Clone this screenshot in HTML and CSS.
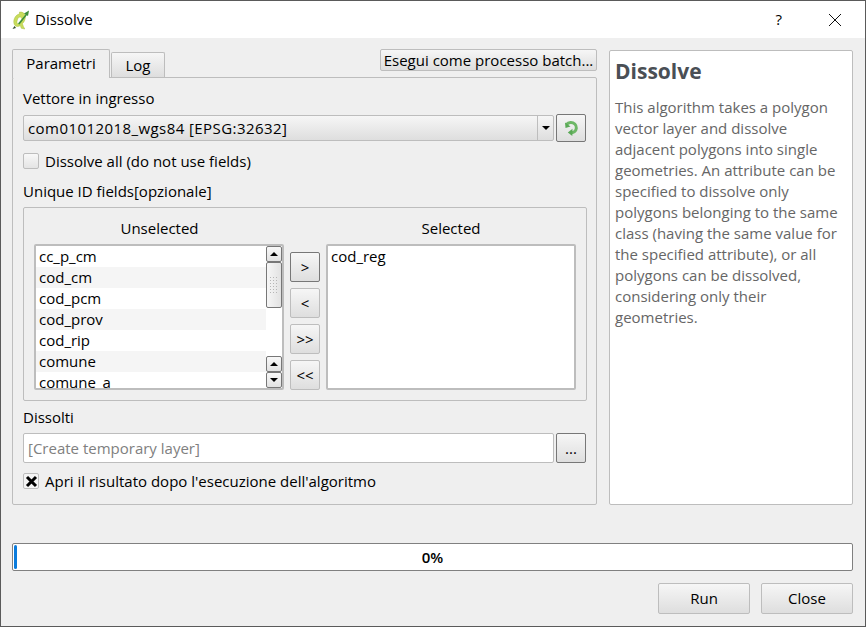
FILE: index.html
```html
<!DOCTYPE html>
<html lang="it">
<head>
  <meta charset="UTF-8" />
  <title>Dissolve</title>
  <link rel="stylesheet" href="styles.css">
</head>
<body>
  <div class="window">
    <!-- Barra del titolo -->
    <div class="titlebar">
      <svg class="app-icon" width="18" height="20" viewBox="0 0 18 20">
        <path d="M7.500 4C4 4.500 1.500 8.500 1.800 12.500c.2 2.500 1.700 4 3.700 4 1 0 2-.3 2.800-1l1 2.800 3.500.7-1.400-2.500-1-2.800c2-2 3-4.500 3-7 0-3-2.400-5-5.900-4.700zM7.800 7c1.500 0 2.200 1 2 2.700-.2 2-1.800 4.300-3.300 4.300-1.100 0-1.700-1-1.500-2.500C5.300 9.300 6.300 7 7.800 7z" fill="#c8dc5c" stroke="#a9c043" stroke-width=".5"/>
        <path d="M6 13.500L13.500 4.500 12 3.500 17 .5 16 6l-1.200-.8-7.300 9.300z" fill="#3c8e3a"/>
        <path d="M.5 19l3.500-1-1.500-2z" fill="#2f4a28"/>
      </svg>
      <span class="title-text">Dissolve</span>
      <span class="help-btn">?</span>
      <svg class="close-btn" width="12" height="12" viewBox="0 0 12 12">
        <path d="M0 0L12 12M12 0L0 12" stroke="#111" stroke-width="1" fill="none"/>
      </svg>
    </div>

    <div class="content">
      <div class="top-row">
        <div class="left-col">
          <div class="tab-row">
            <div class="tab tab-active">Parametri</div>
            <div class="tab">Log</div>
            <button class="btn batch-btn">Esegui come processo batch...</button>
          </div>

          <div class="tab-panel">
            <div class="field-label first">Vettore in ingresso</div>
            <div class="layer-row">
              <div class="combo">
                <span class="combo-text">com01012018_wgs84 [EPSG:32632]</span>
                <span class="combo-arrow"><span class="arrow-down"></span></span>
              </div>
              <button class="btn refresh-btn">
                <svg width="16" height="16" viewBox="0 0 16 16">
                  <path d="M3.500 4.500C5.500 2 9.500 1.800 11.800 4c2.300 2.300 2 6-.5 7.800-.9.600-1.700.9-2.600 1" fill="none" stroke="#6db766" stroke-width="3"/>
                  <path d="M9.500 8.800L4.800 12.500 9.300 16z" fill="#5aa956"/>
                  <path d="M2 2.500L7.500 6.500 2.500 8z" fill="#5aa956"/>
                </svg>
              </button>
            </div>
            <label class="check-row plain">
              <span class="check"></span>
              <span>Dissolve all (do not use fields)</span>
            </label>
            <div class="field-label unique">Unique ID fields[opzionale]</div>

            <div class="group">
              <div class="col-heads">
                <div class="head-left">Unselected</div>
                <div class="head-right">Selected</div>
              </div>
              <div class="lists">
                <div class="list list-left">
                  <div class="rows">
                    <div class="row">cc_p_cm</div>
                    <div class="row alt">cod_cm</div>
                    <div class="row">cod_pcm</div>
                    <div class="row alt">cod_prov</div>
                    <div class="row">cod_rip</div>
                    <div class="row alt">comune</div>
                    <div class="row">comune_a</div>
                  </div>
                  <div class="scrollbar">
                    <div class="sb-btn"><span class="arrow-up"></span></div>
                    <div class="sb-thumb"><span class="grip"></span></div>
                    <div class="sb-track"></div>
                    <div class="sb-btn"><span class="arrow-up"></span></div>
                    <div class="sb-btn"><span class="arrow-down"></span></div>
                  </div>
                </div>
                <div class="move-btns">
                  <button class="btn move-btn strong">&gt;</button>
                  <button class="btn move-btn">&lt;</button>
                  <button class="btn move-btn">&gt;&gt;</button>
                  <button class="btn move-btn">&lt;&lt;</button>
                </div>
                <div class="list list-right">
                  <div class="row">cod_reg</div>
                </div>
              </div>
            </div>

            <div class="field-label dissolved">Dissolti</div>
            <div class="output-row">
              <div class="text-input">[Create temporary layer]</div>
              <button class="btn more-btn">...</button>
            </div>
            <label class="check-row open-after">
              <span class="check checked">
                <svg width="13" height="13" viewBox="0 0 13 13">
                  <path d="M2 2L11 11M11 2L2 11" stroke="#000" stroke-width="3" fill="none"/>
                </svg>
              </span>
              <span>Apri il risultato dopo l'esecuzione dell'algoritmo</span>
            </label>
          </div>
        </div>

        <div class="help-panel">
          <h2>Dissolve</h2>
          <p>This algorithm takes a polygon vector layer and dissolve adjacent polygons into single geometries. An attribute can be specified to dissolve only polygons belonging to the same class (having the same value for the specified attribute), or all polygons can be dissolved, considering only their geometries.</p>
        </div>
      </div>

      <div class="progress">
        <div class="progress-chunk"></div>
        <span class="progress-text">0%</span>
      </div>

      <div class="footer">
        <button class="btn footer-btn">Run</button>
        <button class="btn footer-btn">Close</button>
      </div>
    </div>
  </div>
</body>
</html>
```

FILE: styles.css
```css
* {
  box-sizing: border-box;
}
html, body {
  margin: 0;
  height: 100%;
}
body {
  font-family: "Open Sans", "Liberation Sans", sans-serif;
  font-size: 15px;
  color: #000;
  background: #efefef;
}
.window {
  width: 866px;
  height: 627px;
  border: 1px solid #5a5a5a;
  overflow: hidden;
  background: #efefef;
}
/* Barra del titolo */
.titlebar {
  display: flex;
  align-items: center;
  height: 37px;
  background: #fff;
  padding-left: 11px;
}
.app-icon {
  flex: none;
}
.title-text {
  margin-left: 5px;
  padding-bottom: 2px;
  flex: 1;
}
.help-btn {
  margin-right: 47px;
  padding-bottom: 2px;
  font-size: 15px;
}
.close-btn {
  margin-right: 24px;
}
.content {
  padding: 11px 12px 0 11px;
}
.top-row {
  display: flex;
  gap: 12px;
}
.left-col {
  width: 585px;
}
/* Schede */
.tab-row {
  display: flex;
  align-items: flex-end;
  height: 28px;
}
.tab {
  height: 25px;
  width: 54px;
  margin-left: 1px;
  border: 1px solid #bdbdbd;
  border-bottom: none;
  border-radius: 2px 2px 0 0;
  background: linear-gradient(#f6f6f6, #dedede);
  text-align: center;
  line-height: 25px;
}
.tab-active {
  height: 29px;
  width: 98px;
  margin-left: 0;
  margin-bottom: -1px;
  background: #efefef;
  line-height: 27px;
  position: relative;
  z-index: 1;
}
.btn {
  font-family: inherit;
  font-size: 15px;
  color: #000;
  padding: 0;
  border: 1px solid #bdbdbd;
  border-radius: 2px;
  background: linear-gradient(#f6f6f6, #dedede);
}
.batch-btn {
  align-self: flex-start;
  width: 217px;
  height: 22px;
  margin-left: auto;
  line-height: 18px;
}
.tab-panel {
  height: 428px;
  border: 1px solid #bdbdbd;
  border-radius: 2px;
  padding: 0 10px;
}
.field-label {
  height: 20px;
  line-height: 20px;
}
.first {
  margin-top: 10px;
}
.layer-row {
  display: flex;
  align-items: center;
  height: 28px;
  margin-top: 6px;
}
.combo {
  display: flex;
  width: 532px;
  height: 26px;
  border: 1px solid #bdbdbd;
  border-radius: 2px;
  background: linear-gradient(#f6f6f6, #dedede);
}
.combo-text {
  flex: 1;
  padding-left: 4px;
  line-height: 24px;
  letter-spacing: .43px;
}
.combo-arrow {
  display: flex;
  align-items: center;
  justify-content: center;
  width: 16px;
  border-left: 1px solid #bdbdbd;
}
.arrow-down, .arrow-up {
  display: block;
  width: 0;
  height: 0;
  border-left: 4px solid transparent;
  border-right: 4px solid transparent;
}
.arrow-down {
  border-top: 4px solid #000;
}
.arrow-up {
  border-bottom: 4px solid #000;
}
.refresh-btn {
  display: flex;
  align-items: center;
  justify-content: center;
  width: 30px;
  height: 28px;
  margin-left: 2px;
  border-color: #777;
}
.check-row {
  display: flex;
  align-items: center;
  gap: 6px;
  height: 16px;
}
.plain {
  margin-top: 11px;
}
.check {
  display: flex;
  align-items: center;
  justify-content: center;
  width: 16px;
  height: 16px;
  border: 1px solid #bdbdbd;
  border-radius: 2px;
  background: linear-gradient(#f8f8f8, #e4e4e4);
}
.checked {
  background: #f4f4f4;
}
.unique {
  margin-top: 12px;
}
/* Gruppo campi */
.group {
  width: 564px;
  height: 194px;
  margin-top: 6px;
  border: 1px solid #bdbdbd;
  border-radius: 2px;
  padding: 0 10px;
}
.col-heads {
  display: flex;
  height: 36px;
  line-height: 41px;
}
.head-left {
  width: 249px;
  padding-left: 2px;
  text-align: center;
}
.head-right {
  width: 250px;
  margin-left: 43px;
  text-align: center;
}
.lists {
  display: flex;
  height: 146px;
}
.list {
  height: 146px;
  border: 2px solid #bdbdbd;
  border-radius: 2px;
  background: #fff;
  overflow: hidden;
}
.list-left {
  display: flex;
  width: 250px;
}
.list-right {
  width: 250px;
  margin-left: 6px;
}
.rows {
  flex: 1;
}
.row {
  height: 21px;
  line-height: 21px;
  padding-left: 3px;
}
.alt {
  background: #f5f5f5;
}
/* Barra di scorrimento */
.scrollbar {
  display: flex;
  flex-direction: column;
  width: 16px;
  background: #fff;
}
.sb-btn {
  display: flex;
  align-items: center;
  justify-content: center;
  height: 16px;
  border: 1px solid #777;
  border-radius: 2px;
  background: linear-gradient(#f8f8f8, #e2e2e2);
}
.sb-thumb {
  display: flex;
  align-items: center;
  justify-content: center;
  height: 46px;
  border: 1px solid #777;
  border-radius: 2px;
  background: linear-gradient(90deg, #f6f6f6, #e2e2e2);
}
.grip {
  width: 10px;
  height: 18px;
  background-image: radial-gradient(#b5b5b5 1px, transparent 1px);
  background-size: 3px 3px;
}
.sb-track {
  flex: 1;
  background-image: radial-gradient(#d0d0d0 .7px, transparent .7px);
  background-size: 2px 2px;
}
.move-btns {
  display: flex;
  flex-direction: column;
  gap: 6px;
  padding-top: 8px;
  margin-left: 6px;
}
.move-btn {
  width: 30px;
  height: 30px;
}
.strong {
  border-color: #777;
}
.dissolved {
  margin-top: 6px;
}
.output-row {
  display: flex;
  height: 30px;
  margin-top: 6px;
}
.text-input {
  width: 532px;
  height: 30px;
  border: 1px solid #bdbdbd;
  border-radius: 2px;
  background: #fff;
  color: #808080;
  padding-left: 4px;
  line-height: 28px;
}
.more-btn {
  width: 30px;
  height: 30px;
  margin-left: 2px;
  border-color: #777;
}
.open-after {
  margin-top: 10px;
}
/* Pannello di aiuto */
.help-panel {
  width: 244px;
  height: 455px;
  margin-top: 1px;
  border: 1px solid #bdbdbd;
  border-radius: 2px;
  background: #fff;
  padding: 5px 5px;
}
.help-panel h2 {
  margin: 0;
  font-size: 21px;
  line-height: 30px;
  color: #4a4f55;
}
.help-panel p {
  margin: 11px 0 0;
  line-height: 21px;
  color: #666;
}
/* Avanzamento */
.progress {
  position: relative;
  height: 28px;
  margin-top: 38px;
  border: 1px solid #808080;
  border-radius: 2px;
  background: #fff;
  text-align: center;
  line-height: 26px;
  font-weight: 600;
}
.progress-chunk {
  position: absolute;
  left: 1px;
  top: 1px;
  bottom: 1px;
  width: 3px;
  background: #0a7bdc;
  border-radius: 2px;
}
.footer {
  display: flex;
  justify-content: flex-end;
  gap: 11px;
  margin-top: 12px;
}
.footer-btn {
  width: 92px;
  height: 31px;
  padding-bottom: 2px;
}
```
